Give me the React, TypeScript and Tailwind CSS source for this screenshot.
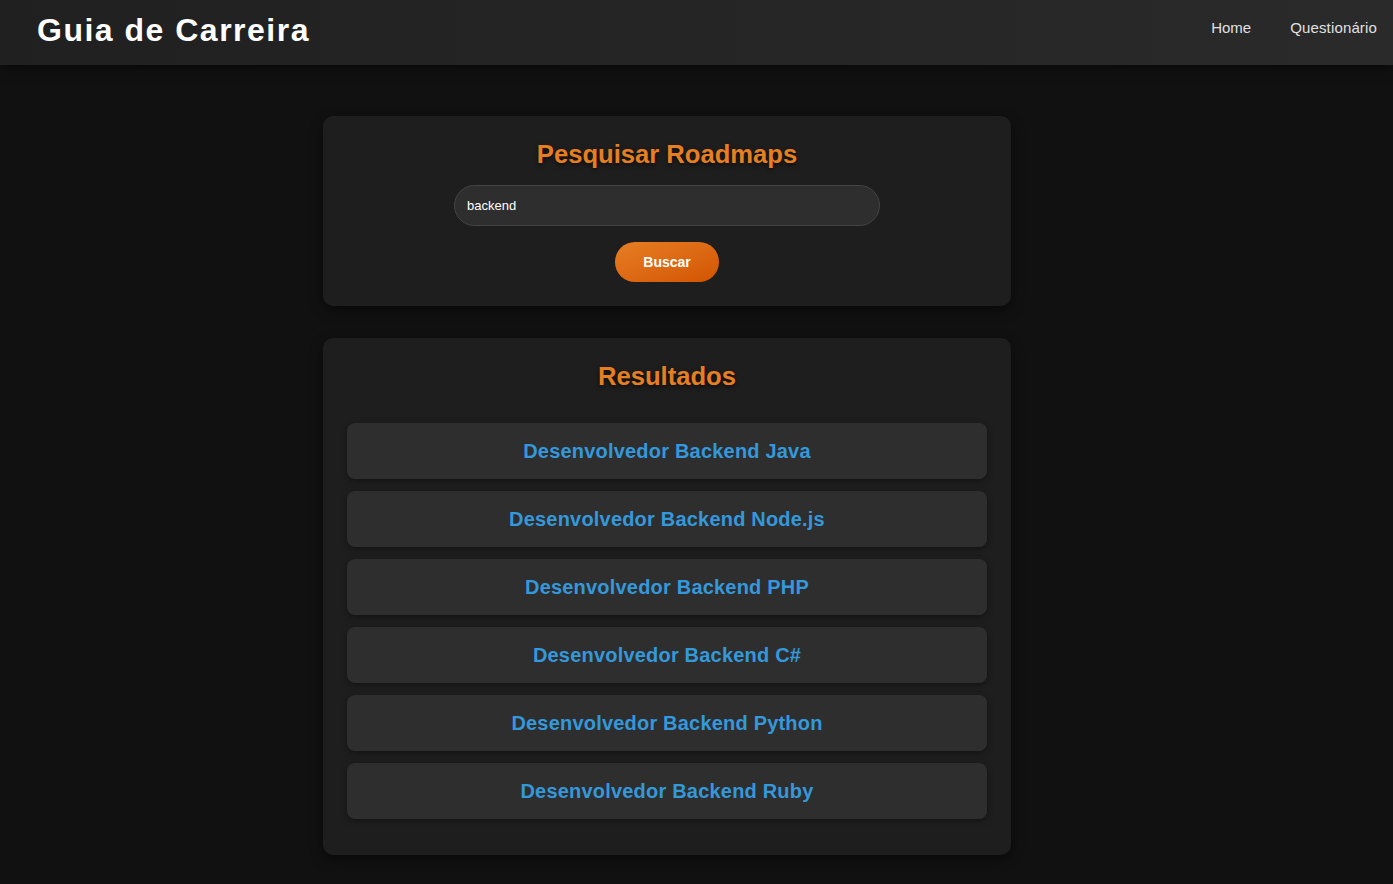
const results = [
  "Desenvolvedor Backend Java",
  "Desenvolvedor Backend Node.js",
  "Desenvolvedor Backend PHP",
  "Desenvolvedor Backend C#",
  "Desenvolvedor Backend Python",
  "Desenvolvedor Backend Ruby",
];

export default function App() {
  return (
    <div className="min-h-screen bg-[#111111] font-['Liberation_Sans',Arial,sans-serif] text-white">
      <header className="h-[65px] flex items-center justify-between pl-[37px] pr-4 bg-gradient-to-r from-[#202020] to-[#2a2a2a] shadow-[0_2px_10px_rgba(0,0,0,0.6)] relative z-10">
        <h1 className="text-[32px] font-bold tracking-[1.5px] leading-none -mt-[6px]">Guia de Carreira</h1>
        <nav className="flex items-center gap-[39px] text-[15px] text-[#e0e0e0] -mt-[9px]">
          <a href="#">Home</a>
          <a href="#" className="tracking-[0.15px]">Questionário</a>
        </nav>
      </header>

      <main className="flex flex-col items-center pt-[51px] pb-8 pr-[59px] gap-8">
        <section className="w-[688px] bg-[#1e1e1e] rounded-[10px] shadow-[0_4px_12px_rgba(0,0,0,0.5)] px-6 pt-6 pb-6 flex flex-col items-center">
          <h2 className="text-[25.6px] leading-[28px] font-bold text-[#e67e22] [text-shadow:0_2px_4px_rgba(0,0,0,0.6)]">
            Pesquisar Roadmaps
          </h2>
          <input
            defaultValue="backend"
            className="mt-[17px] w-[426px] h-[41px] rounded-full bg-[#2e2e2e] border border-[#444] px-3 text-[13px] text-white outline-none"
          />
          <button className="mt-4 w-[104px] h-[40px] rounded-full bg-gradient-to-br from-[#e67e22] to-[#d35400] text-[14px] font-bold text-white">
            Buscar
          </button>
        </section>

        <section className="w-[688px] bg-[#1e1e1e] rounded-[10px] shadow-[0_4px_12px_rgba(0,0,0,0.5)] px-6 pt-6 pb-9 flex flex-col items-center">
          <h2 className="text-[25.6px] leading-[28px] font-bold text-[#e67e22] [text-shadow:0_2px_4px_rgba(0,0,0,0.6)]">
            Resultados
          </h2>
          <ul className="mt-[33px] w-full flex flex-col gap-3">
            {results.map((r) => (
              <li
                key={r}
                className="h-[56px] flex items-center justify-center rounded-lg bg-[#2e2e2e] shadow-[0_2px_6px_rgba(0,0,0,0.4)]"
              >
                <a href="#" className="text-[20px] font-bold text-[#3498db] tracking-[0.2px]">
                  {r}
                </a>
              </li>
            ))}
          </ul>
        </section>
      </main>
    </div>
  );
}
